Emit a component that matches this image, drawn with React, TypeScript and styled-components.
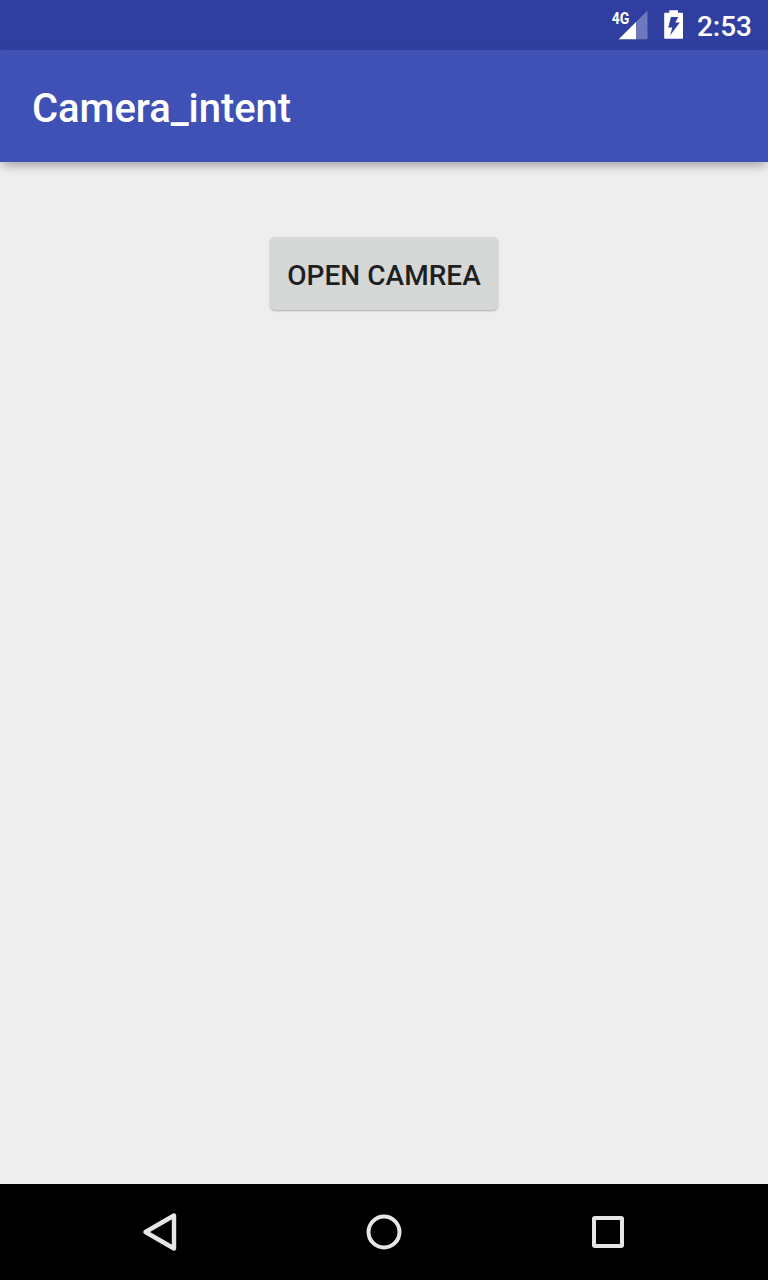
import React from 'react';
import styled, { createGlobalStyle } from 'styled-components';

const GlobalStyle = createGlobalStyle`
  * { box-sizing: border-box; }
  body { margin: 0; font-family: Roboto, sans-serif; background: #eee; }
`;
const Screen = styled.div`
  display: flex;
  flex-direction: column;
  width: 768px;
  height: 1280px;
  overflow: hidden;
  background: #eeeeee;
`;
const StatusBar = styled.header`
  display: flex;
  justify-content: flex-end;
  flex: none;
  height: 50px;
  padding-right: 16px;
  background: #303f9f;
  color: #fff;
`;
const SignalIcon = styled.svg`
  width: 40px;
  height: 50px;
  margin-right: 12px;
`;
const BatteryIcon = styled.svg`
  width: 20px;
  height: 50px;
  margin-right: 13px;
`;
const Clock = styled.time`
  font-size: 28px;
  font-weight: 500;
  line-height: 53px;
`;
const AppBar = styled.div`
  display: flex;
  align-items: center;
  flex: none;
  height: 112px;
  padding: 4px 32px 0;
  background: #3f51b5;
  box-shadow: 0 5px 10px -2px rgba(0, 0, 0, 0.34);
`;
const Title = styled.h1`
  margin: 0;
  color: #fff;
  font-size: 40px;
  font-weight: 500;
  letter-spacing: -0.04px;
`;
const Content = styled.main`
  display: flex;
  flex: 1;
  justify-content: center;
  align-items: flex-start;
  padding-top: 75px;
`;
const RaisedButton = styled.button`
  width: 228px;
  height: 73px;
  padding: 4px 0 0;
  border: 0;
  border-radius: 5px;
  background: #d6d7d7;
  color: #1e1f1f;
  box-shadow: 0 1px 2px rgba(0, 0, 0, 0.27);
  font: 500 28px Roboto, sans-serif;
  letter-spacing: 0.05px;
  text-transform: uppercase;
`;
const NavBar = styled.nav`
  display: flex;
  justify-content: center;
  flex: none;
  height: 96px;
  background: #000;
`;
const NavKey = styled.svg`
  width: 224px;
  height: 96px;
  fill: none;
  stroke: #e6e6e6;
  stroke-width: 4;
  stroke-linejoin: round;
`;

export default function App() {
  return (
    <Screen>
      <GlobalStyle />
      <StatusBar>
        <SignalIcon viewBox="0 0 40 50">
          <text x="-0.2" y="23.7" fill="#fff" fontFamily="Roboto" fontSize="17" fontWeight="700" textLength="17.6" lengthAdjust="spacingAndGlyphs">4G</text>
          <path d="M35.5 10.5V39.3H24V22Z" fill="#fff" opacity=".3" />
          <path d="M24 22V39.3H6.7Z" fill="#fff" />
        </SignalIcon>
        <BatteryIcon viewBox="0 0 20 50">
          <path fillRule="evenodd" fill="#fff" d="M5.3 10.3H14V12.8H18.3Q19 12.8 19 13.5V38Q19 38.8 18.3 38.8H1Q.2 38.8 .2 38V13.5Q.2 12.8 1 12.8H5.3ZM7 17L4.2 27.4H8.3L6.2 35.2L15.8 22.5H11.3L14.3 17Z" />
        </BatteryIcon>
        <Clock>2:53</Clock>
      </StatusBar>
      <AppBar><Title>Camera_intent</Title></AppBar>
      <Content><RaisedButton>Open camrea</RaisedButton></Content>
      <NavBar>
        <NavKey viewBox="0 0 224 96"><path d="M126 31.5V64.5L97.5 48Z" strokeWidth="4.4" /></NavKey>
        <NavKey viewBox="0 0 224 96"><circle cx="112" cy="48" r="15.5" /></NavKey>
        <NavKey viewBox="0 0 224 96"><rect x="98" y="34" width="28" height="28" rx="1" /></NavKey>
      </NavBar>
    </Screen>
  );
}
